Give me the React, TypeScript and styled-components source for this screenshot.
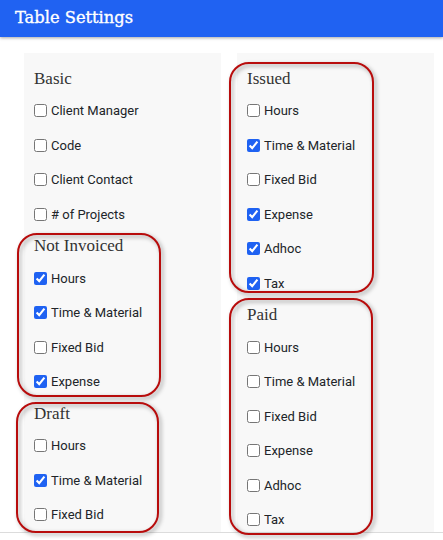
import * as React from 'react'
import styled, { createGlobalStyle } from 'styled-components'

const GlobalStyle = createGlobalStyle`
  html, body {
    margin: 0;
    padding: 0;
    background: #fff;
  }
  body {
    font-family: Roboto, "Liberation Sans", sans-serif;
  }
`

const Page = styled.div`
  width: 443px;
  height: 540px;
  overflow: hidden;
  background: #fff;
`

const Header = styled.header`
  position: relative;
  z-index: 2;
  height: 37px;
  display: flex;
  align-items: center;
  padding: 0 15px;
  background: #2062f2;
  box-shadow: 0 1px 3px rgba(0, 0, 0, 0.35);
`

const Title = styled.h1`
  margin: 0;
  font-family: "DejaVu Serif", "Liberation Serif", serif;
  font-weight: 400;
  font-size: 16.3px;
  color: #fff;
  line-height: 1;
  -webkit-text-stroke: 0.35px #fff;
`

const Body = styled.div`
  display: flex;
  gap: 16px;
  padding: 16px 0 0 24px;
  height: 479px;
`

const Column = styled.div`
  width: 197px;
  height: 100%;
  padding: 11px 10px 0;
  box-sizing: border-box;
  background: #f8f8f8;
`

const Footer = styled.div`
  height: 7px;
  border-top: 1px solid #dcdcdc;
`

const Group = styled.section`
  position: relative;
`

const Outline = styled.div<{ $top: number; $bottom: number; $left: number; $width: number }>`
  position: absolute;
  z-index: 3;
  top: ${p => p.$top}px;
  bottom: ${p => p.$bottom}px;
  left: ${p => p.$left}px;
  width: ${p => p.$width}px;
  box-sizing: border-box;
  border: 2px solid #b80c0c;
  border-radius: 20px;
  pointer-events: none;
  filter: drop-shadow(2px 2px 2px rgba(0, 0, 0, 0.4));
`

const GroupTitle = styled.h3`
  margin: 0;
  height: 29.5px;
  display: flex;
  align-items: center;
  font-family: "Liberation Serif", "DejaVu Serif", serif;
  font-weight: 400;
  font-size: 17px;
  color: #333;
`

const Row = styled.label`
  height: 34.5px;
  display: flex;
  align-items: center;
  font-size: 13px;
  color: #212529;
`

const Check = styled.input`
  width: 13px;
  height: 13px;
  margin: 0 4px 0 0;
  accent-color: #1f62f2;
`

interface Item {
  label: string
  checked?: boolean
}

interface Section {
  title: string
  items: Item[]
  outline?: { top: number; bottom: number; left: number; width: number }
}

const leftSections: Section[] = [
  {
    title: 'Basic',
    items: [
      { label: 'Client Manager' },
      { label: 'Code' },
      { label: 'Client Contact' },
      { label: '# of Projects' }
    ]
  },
  {
    title: 'Not Invoiced',
    outline: { top: 1, bottom: 2, left: -17, width: 144 },
    items: [
      { label: 'Hours', checked: true },
      { label: 'Time & Material', checked: true },
      { label: 'Fixed Bid' },
      { label: 'Expense', checked: true }
    ]
  },
  {
    title: 'Draft',
    outline: { top: 3, bottom: -1, left: -18, width: 143 },
    items: [
      { label: 'Hours' },
      { label: 'Time & Material', checked: true },
      { label: 'Fixed Bid' }
    ]
  }
]

const rightSections: Section[] = [
  {
    title: 'Issued',
    outline: { top: -2, bottom: 8, left: -18, width: 145 },
    items: [
      { label: 'Hours' },
      { label: 'Time & Material', checked: true },
      { label: 'Fixed Bid' },
      { label: 'Expense', checked: true },
      { label: 'Adhoc', checked: true },
      { label: 'Tax', checked: true }
    ]
  },
  {
    title: 'Paid',
    outline: { top: -3, bottom: 2, left: -18, width: 144 },
    items: [
      { label: 'Hours' },
      { label: 'Time & Material' },
      { label: 'Fixed Bid' },
      { label: 'Expense' },
      { label: 'Adhoc' },
      { label: 'Tax' }
    ]
  }
]

const SettingsGroup = ({ section }: { section: Section }) => (
  <Group>
    {section.outline && (
      <Outline
        $top={section.outline.top}
        $bottom={section.outline.bottom}
        $left={section.outline.left}
        $width={section.outline.width}
      />
    )}
    <GroupTitle>{section.title}</GroupTitle>
    {section.items.map(item => (
      <Row key={item.label}>
        <Check type="checkbox" defaultChecked={!!item.checked} />
        {item.label}
      </Row>
    ))}
  </Group>
)

export default function App() {
  return (
    <Page>
      <GlobalStyle />
      <Header>
        <Title>Table Settings</Title>
      </Header>
      <Body>
        <Column>
          {leftSections.map(s => <SettingsGroup key={s.title} section={s} />)}
        </Column>
        <Column>
          {rightSections.map(s => <SettingsGroup key={s.title} section={s} />)}
        </Column>
      </Body>
      <Footer />
    </Page>
  )
}
